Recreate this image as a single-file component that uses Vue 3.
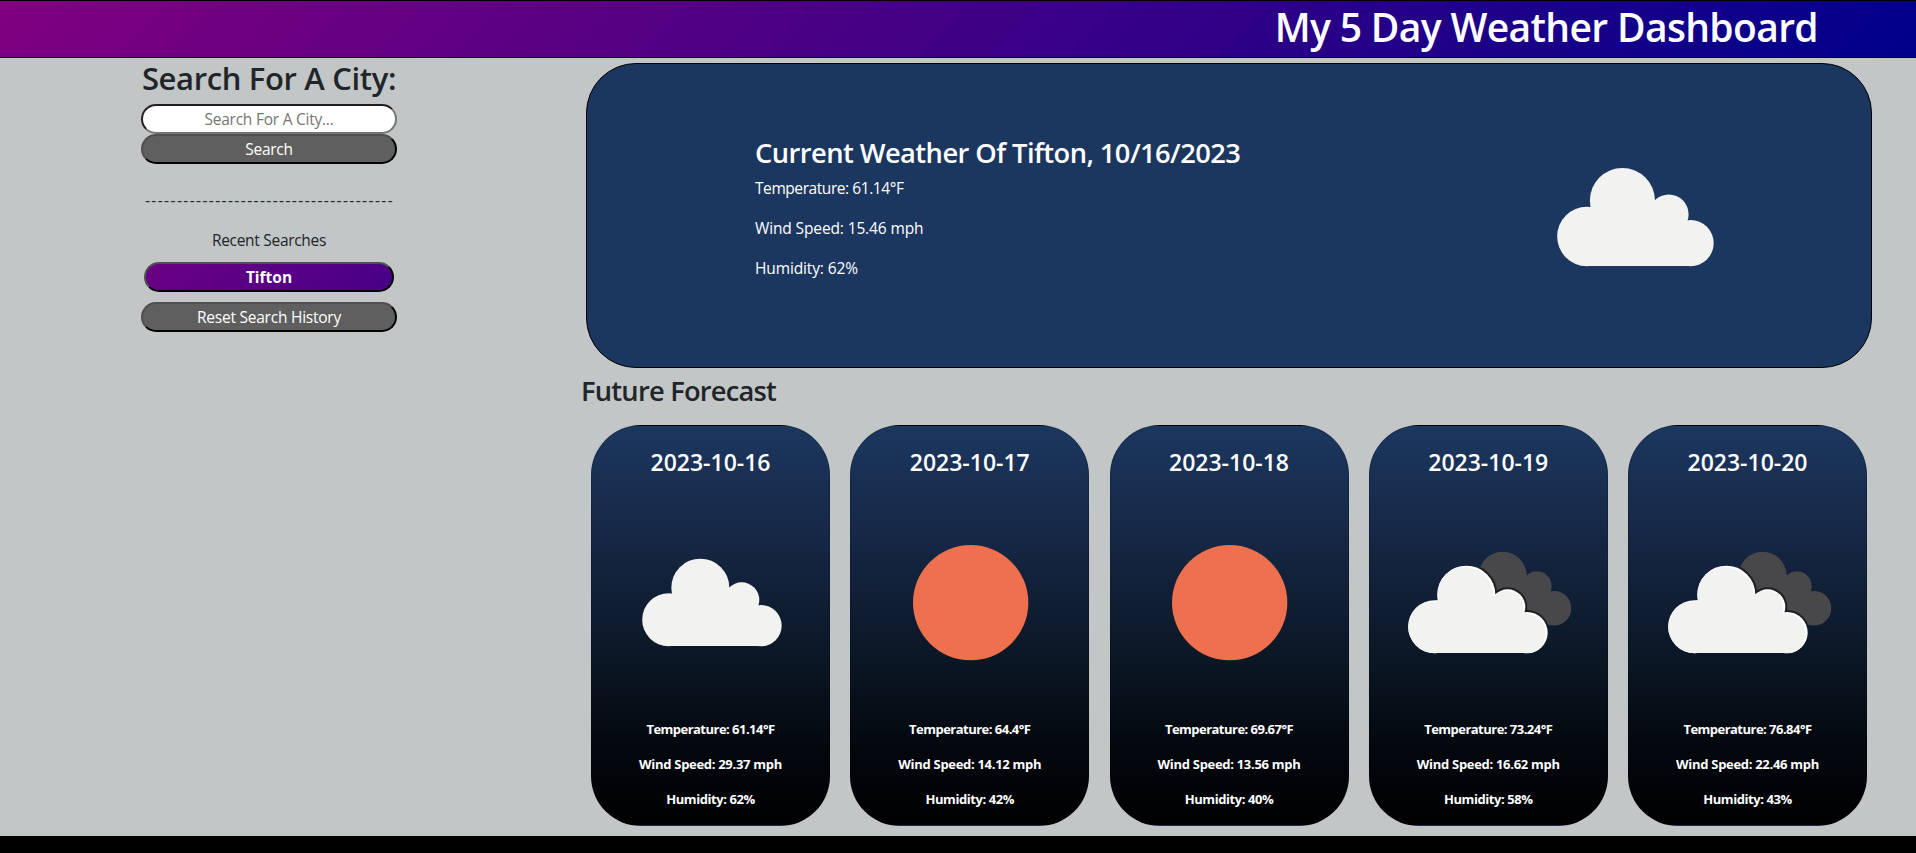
<script setup>
const dashes = '-'.repeat(39)
const current = {
  title: 'Current Weather Of Tifton, 10/16/2023',
  temp: '61.14',
  wind: '15.46',
  humidity: 62,
}
const days = [
  { date: '2023-10-16', icon: 'cloud', temp: '61.14', wind: '29.37', humidity: 62 },
  { date: '2023-10-17', icon: 'sun', temp: '64.4', wind: '14.12', humidity: 42 },
  { date: '2023-10-18', icon: 'sun', temp: '69.67', wind: '13.56', humidity: 40 },
  { date: '2023-10-19', icon: 'broken', temp: '73.24', wind: '16.62', humidity: 58 },
  { date: '2023-10-20', icon: 'broken', temp: '76.84', wind: '22.46', humidity: 43 },
]
</script>

<template>
  <div class="page">
    <svg class="defs" width="0" height="0" aria-hidden="true">
      <defs>
        <g id="cloud">
          <circle cx="79" cy="183" r="79.5" />
          <circle cx="174" cy="87" r="87" />
          <circle cx="298" cy="124" r="53" />
          <circle cx="356" cy="201" r="62" />
          <rect x="78" y="110" width="262" height="152" />
          <rect x="72" y="200" width="290" height="62" />
        </g>
        <clipPath id="front-clip">
          <circle cx="79" cy="183" r="79.5" />
          <circle cx="174" cy="87" r="87" />
          <circle cx="298" cy="124" r="53" />
          <circle cx="356" cy="201" r="62" />
          <rect x="78" y="110" width="262" height="152" />
          <rect x="72" y="200" width="290" height="62" />
        </clipPath>
        <clipPath id="back-clip">
          <circle cx="283" cy="30" r="72" />
          <circle cx="386" cy="61" r="44" />
          <circle cx="437" cy="128" r="52" />
          <rect x="283" y="40" width="130" height="140" />
        </clipPath>
      </defs>
    </svg>

    <header class="top"><h1>My 5 Day Weather Dashboard</h1></header>

    <main class="content">
      <aside class="side">
        <h2>Search For A City:</h2>
        <input type="text" placeholder="Search For A City..." />
        <button class="btn">Search</button>
        <p class="dashes">{{ dashes }}</p>
        <p class="recent">Recent Searches</p>
        <button class="btn city">Tifton</button>
        <button class="btn">Reset Search History</button>
      </aside>

      <section class="weather">
        <article class="current">
          <div class="info">
            <h3>{{ current.title }}</h3>
            <p class="temp">Temperature: {{ current.temp }}°F</p>
            <p>Wind Speed: {{ current.wind }} mph</p>
            <p>Humidity: {{ current.humidity }}%</p>
          </div>
          <svg class="big-cloud" viewBox="0 0 418 262"><use href="#cloud" fill="#f2f2f0" /></svg>
        </article>

        <h3 class="future">Future Forecast</h3>

        <div class="cards">
          <article v-for="d in days" :key="d.date" class="card">
            <h4>{{ d.date }}</h4>
            <!-- three viewBox units per pixel -->
            <svg class="icon" viewBox="0 0 600 600">
              <use v-if="d.icon === 'cloud'" href="#cloud" x="94" y="149" fill="#f2f2f0" />
              <circle v-else-if="d.icon === 'sun'" cx="302" cy="281" r="173" fill="#ee704e" />
              <g v-else transform="translate(61 170)">
                <g clip-path="url(#back-clip)">
                  <rect x="200" y="-50" width="300" height="250" fill="#48484a" />
                  <use href="#cloud" fill="#1f1f22" stroke="#1f1f22" stroke-width="12" />
                </g>
                <use href="#cloud" fill="#ffffff" />
                <g clip-path="url(#front-clip)"><use href="#cloud" x="-6" y="4" fill="#f2f2f0" /></g>
              </g>
            </svg>
            <p class="temp">Temperature: {{ d.temp }}°F</p>
            <p class="wind">Wind Speed: {{ d.wind }} mph</p>
            <p>Humidity: {{ d.humidity }}%</p>
          </article>
        </div>
      </section>
    </main>
  </div>
</template>

<style>
body {
  margin: 0;
  background: #000;
}
</style>

<style scoped>
.page {
  height: 853px;
  overflow: hidden;
  background: #000;
  color: #212529;
  font-family: "Open Sans", "Noto Sans", sans-serif;
  font-size: 15.5px;
}
.page * {
  box-sizing: border-box;
}
.defs {
  position: absolute;
}
h1, h2, h3, h4, p {
  margin: 0;
  white-space: nowrap;
}
.top {
  height: 58px;
  border: solid #000;
  border-width: 1px 0;
  background: linear-gradient(135deg, purple, darkblue);
  display: flex;
  justify-content: flex-end;
  padding-right: 98px;
}
h1 {
  color: #fff;
  font-size: 39px;
  font-weight: 600;
  line-height: 52px;
  letter-spacing: -0.64px;
}
.content {
  height: 778px;
  background: #c2c6c6;
  display: flex;
  padding: 0 44px 0 141px;
}
.side {
  width: 256px;
  margin-right: 185px;
  display: flex;
  flex-direction: column;
  align-items: center;
}
h2 {
  font-size: 31px;
  font-weight: 600;
  line-height: 38px;
  padding-top: 1px;
  margin-bottom: 7px;
  letter-spacing: -0.35px;
}
input,
.btn {
  width: 256px;
  height: 30px;
  flex: none;
  border: 2px solid;
  border-radius: 20px;
  padding: 0;
  text-align: center;
  font-family: inherit;
  font-size: 15.5px;
  letter-spacing: -0.24px;
}
input {
  background: #fff;
  border-color: #202020 #767676 #767676 #202020;
}
input::placeholder {
  color: #757575;
}
.btn {
  background: #5f5f5f;
  color: #fff;
  border-color: #505050 #000 #000 #505050;
}
.city {
  width: 250px;
  margin-bottom: 10px;
  background: linear-gradient(135deg, #6b0083, #470088);
  font-weight: 700;
  letter-spacing: 0;
}
.dashes {
  line-height: 24px;
  margin: 24px 0 16px;
  letter-spacing: 1.4px;
  padding-left: 1px;
}
.recent {
  line-height: 24px;
  margin-bottom: 10px;
  letter-spacing: -0.3px;
}
.weather {
  width: 1290px;
}
.current {
  margin: 5px 0 0 4px;
  height: 305px;
  border: 1px solid #000;
  border-radius: 50px;
  background: #1c375f;
  color: #fff;
  display: flex;
  justify-content: space-between;
  padding: 72px 157px 0 168px;
}
h3 {
  font-size: 27.3px;
  font-weight: 600;
  line-height: 34px;
  letter-spacing: -0.56px;
}
.info p {
  line-height: 24px;
  margin: 0 0 16px;
  letter-spacing: -0.13px;
}
.info .temp {
  margin-top: 6px;
  letter-spacing: -0.43px;
}
.big-cloud {
  width: 157px;
  height: 98px;
  margin-top: 32px;
  overflow: visible;
  filter: blur(0.6px);
}
.future {
  margin: 6px 0 0 -1px;
  letter-spacing: -0.78px;
}
.cards {
  display: grid;
  grid-template-columns: repeat(5, 239px);
  justify-content: space-between;
  padding: 0 5px 0 9px;
  margin-top: 17px;
}
.card {
  height: 401px;
  border: 1px solid rgba(0, 0, 0, 0.175);
  border-radius: 50px;
  background: linear-gradient(#1c375f, #152643 30%, #0a1623 60%, #04080f 80%, #000);
  color: #fff;
  display: flex;
  flex-direction: column;
  align-items: center;
  padding-top: 21px;
}
h4 {
  font-size: 23px;
  font-weight: 600;
  line-height: 30px;
}
.icon {
  width: 200px;
  height: 200px;
  margin: 32px 0 10px;
  overflow: visible;
  filter: blur(0.6px);
}
.card p {
  font-size: 13px;
  font-weight: 700;
  line-height: 21px;
  margin-bottom: 14px;
  letter-spacing: -0.42px;
}
.card .temp {
  letter-spacing: -0.52px;
}
.card .wind {
  letter-spacing: -0.3px;
}
</style>
